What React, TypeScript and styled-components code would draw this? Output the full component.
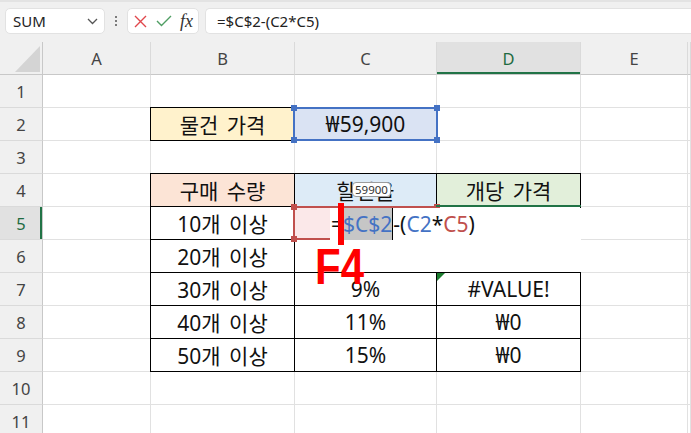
import styled, { createGlobalStyle } from "styled-components";

const GlobalStyle = createGlobalStyle`
  html, body {
    margin: 0;
    padding: 0;
    background: #fff;
    overflow: hidden;
  }
  body {
    font-family: "Noto Sans", "Noto Sans CJK KR", sans-serif;
  }
`;

const Toolbar = styled.div`
  height: 42px;
  box-sizing: border-box;
  background: #f0f0f0;
  border-top: 2px solid #e3e3e3;
  display: flex;
  align-items: flex-start;
  padding: 6px 0 0 5px;
`;

const NameBox = styled.div`
  width: 100px;
  height: 26px;
  box-sizing: border-box;
  background: #fff;
  border: 1px solid #e2e2e2;
  border-radius: 5px;
  display: flex;
  align-items: center;
  justify-content: space-between;
  padding: 0 6px 0 7px;
  font-size: 15px;
  color: #222;
`;

const Dots = styled.div`
  width: 22px;
  height: 26px;
  display: flex;
  flex-direction: column;
  align-items: center;
  justify-content: center;
  gap: 2px;

  span {
    width: 2px;
    height: 2px;
    border-radius: 1px;
    background: #555;
  }
`;

const IconBox = styled.div`
  width: 72px;
  height: 26px;
  box-sizing: border-box;
  background: #fff;
  border: 1px solid #e2e2e2;
  border-radius: 5px;
  display: flex;
  align-items: center;
  padding-left: 6px;
  gap: 9px;
`;

const Fx = styled.span`
  font-family: "Liberation Serif", serif;
  font-style: italic;
  font-size: 18px;
  color: #333;
  line-height: 1;
  margin-left: -1px;
`;

const FormulaInput = styled.div`
  flex: 1;
  height: 26px;
  margin-left: 6px;
  box-sizing: border-box;
  background: #fff;
  border: 1px solid #e2e2e2;
  border-right: none;
  border-radius: 5px 0 0 5px;
  padding-left: 11px;
  font-size: 15px;
  line-height: 24px;
  color: #222;
`;

const Sheet = styled.div`
  display: grid;
  grid-template-columns: 43px 108px 144px 142px 144px 107px 1fr;
  grid-auto-rows: 33px;
`;

const Corner = styled.div`
  background: #f0f0f0;
  border-right: 1px solid #c8c8c8;
  border-bottom: 1px solid #c8c8c8;
  box-sizing: border-box;
`;

const ColHeader = styled.div<{ $active?: boolean }>`
  box-sizing: border-box;
  background: ${(p) => (p.$active ? "#e1e1e1" : "#f0f0f0")};
  border-right: 1px solid #dadada;
  border-bottom: 1px solid #c8c8c8;
  box-shadow: ${(p) => (p.$active ? "inset 0 -2px 0 #217346" : "none")};
  display: flex;
  align-items: center;
  justify-content: center;
  font-size: 16.5px;
  color: ${(p) => (p.$active ? "#1e6b41" : "#444")};
`;

const RowHeader = styled.div<{ $active?: boolean }>`
  box-sizing: border-box;
  background: ${(p) => (p.$active ? "#e1e1e1" : "#f0f0f0")};
  border-right: 1px solid #c8c8c8;
  border-bottom: 1px solid #dadada;
  box-shadow: ${(p) => (p.$active ? "inset -2px 0 0 #217346" : "none")};
  display: flex;
  align-items: center;
  justify-content: center;
  font-size: 16.5px;
  color: ${(p) => (p.$active ? "#1e6b41" : "#444")};
`;

const Cell = styled.div<{ $fill?: string; $boxed?: boolean }>`
  position: relative;
  box-sizing: border-box;
  background: ${(p) => p.$fill ?? "#fff"};
  border-right: 1px solid #e1e1e1;
  border-bottom: 1px solid #e1e1e1;
  display: flex;
  align-items: center;
  justify-content: center;
  font-size: 21px;
  color: #111;
  white-space: nowrap;
  word-spacing: 3px;

  &::after {
    content: "";
    display: ${(p) => (p.$boxed ? "block" : "none")};
    position: absolute;
    top: -1px;
    left: -1px;
    right: -1px;
    bottom: -1px;
    border: 1px solid #000;
    pointer-events: none;
  }
`;

const RefFrame = styled.div<{ $color: string }>`
  position: absolute;
  top: -1px;
  left: -2px;
  right: -2px;
  bottom: -1px;
  border: 2px solid ${(p) => p.$color};
  z-index: 3;
  pointer-events: none;

  span {
    position: absolute;
    width: 6px;
    height: 6px;
    background: ${(p) => p.$color};
  }
  span:nth-child(1) { top: -4px; left: -4px; }
  span:nth-child(2) { top: -4px; right: -4px; }
  span:nth-child(3) { bottom: -4px; left: -4px; }
  span:nth-child(4) { bottom: -4px; right: -4px; }
`;

const Tooltip = styled.div`
  position: absolute;
  left: 57px;
  top: 8px;
  height: 15px;
  box-sizing: border-box;
  padding: 0 2px;
  background: #fff;
  border: 1px solid #9c9c9c;
  border-radius: 4px;
  font-size: 11.5px;
  line-height: 13px;
  color: #333;
  word-spacing: 0;
  z-index: 6;
`;

const ActiveBar = styled.div`
  position: absolute;
  top: -2px;
  left: -1px;
  right: -1px;
  height: 2px;
  background: #217346;
  z-index: 4;
`;

const ErrorMark = styled.div`
  position: absolute;
  top: 0;
  left: 0;
  width: 0;
  height: 0;
  border-top: 8px solid #1b7c2e;
  border-right: 8px solid transparent;
  z-index: 2;
`;

const Editor = styled.div`
  position: absolute;
  top: 1px;
  left: -107px;
  width: 251px;
  height: 64px;
  background: #fff;
  z-index: 5;
  padding-left: 1px;
  box-sizing: border-box;
  font-size: 21px;
  line-height: 32px;
  color: #111;
  word-spacing: 0;
  display: flex;
  align-items: flex-start;
`;

const Token = styled.span<{ $color: string }>`
  color: ${(p) => p.$color};
`;

const Selection = styled.span`
  display: inline-block;
  height: 32px;
  background: #c6c6c6;
  color: #4472c4;
  border-right: 1px solid #000;
`;

const RedBar = styled.div`
  position: absolute;
  left: 8px;
  top: -5px;
  width: 6px;
  height: 42px;
  background: #ff0000;
`;

const KeyHint = styled.div`
  position: absolute;
  left: -15px;
  top: 34px;
  font-family: "Liberation Sans", Arial, sans-serif;
  font-weight: 700;
  font-size: 50px;
  line-height: 50px;
  color: #ff0000;
  transform: scaleX(0.84);
  transform-origin: left top;
`;

type Spec = { text?: string; fill?: string; boxed?: boolean };

const cells: Record<string, Spec> = {
  B2: { text: "물건 가격", fill: "#fff2cc", boxed: true },
  C2: { text: "₩59,900", fill: "#dae3f3", boxed: true },
  B4: { text: "구매 수량", fill: "#fce4d6", boxed: true },
  C4: { text: "할인율", fill: "#ddebf7", boxed: true },
  D4: { text: "개당 가격", fill: "#e2efda", boxed: true },
  B5: { text: "10개 이상", boxed: true },
  B6: { text: "20개 이상", boxed: true },
  B7: { text: "30개 이상", boxed: true },
  B8: { text: "40개 이상", boxed: true },
  B9: { text: "50개 이상", boxed: true },
  C5: { fill: "#fbe8e9", boxed: true },
  C6: { boxed: true },
  C7: { text: "9%", boxed: true },
  C8: { text: "11%", boxed: true },
  C9: { text: "15%", boxed: true },
  D5: { boxed: true },
  D6: { boxed: true },
  D7: { text: "#VALUE!", boxed: true },
  D8: { text: "₩0", boxed: true },
  D9: { text: "₩0", boxed: true },
};

const columns = ["A", "B", "C", "D", "E", "F"];
const rows = [1, 2, 3, 4, 5, 6, 7, 8, 9, 10, 11];

const Corners = () => (
  <>
    <span />
    <span />
    <span />
    <span />
  </>
);

const Extras = ({ address }: { address: string }) => {
  switch (address) {
    case "C2":
      return (
        <RefFrame $color="#4472c4">
          <Corners />
        </RefFrame>
      );
    case "C4":
      return <Tooltip>59900</Tooltip>;
    case "C5":
      return (
        <RefFrame $color="#c0504d">
          <Corners />
        </RefFrame>
      );
    case "D5":
      return (
        <>
          <ActiveBar />
          <Editor>
            <span>=</span>
            <Selection>$C$2</Selection>
            <span>-(</span>
            <Token $color="#4472c4">C2</Token>
            <span>*</span>
            <Token $color="#c0504d">C5</Token>
            <span>)</span>
            <RedBar />
            <KeyHint>F4</KeyHint>
          </Editor>
        </>
      );
    case "D7":
      return <ErrorMark />;
    default:
      return null;
  }
};

const App = () => {
  return (
    <>
      <GlobalStyle />
      <Toolbar>
        <NameBox>
          <span>SUM</span>
          <svg width="11" height="7" viewBox="0 0 11 7">
            <path d="M1 1 L5.5 5.5 L10 1" fill="none" stroke="#555" strokeWidth="1.3" />
          </svg>
        </NameBox>
        <Dots>
          <span />
          <span />
          <span />
        </Dots>
        <IconBox>
          <svg width="13" height="13" viewBox="0 0 13 13">
            <path d="M1 1 L12 12 M12 1 L1 12" stroke="#e0474c" strokeWidth="1.4" />
          </svg>
          <svg width="16" height="12" viewBox="0 0 16 12">
            <path d="M1 6 L5.5 10.5 L15 1" fill="none" stroke="#4f9e63" strokeWidth="1.4" />
          </svg>
          <Fx>fx</Fx>
        </IconBox>
        <FormulaInput>=$C$2-(C2*C5)</FormulaInput>
      </Toolbar>
      <Sheet>
        <Corner>
          <svg width="42" height="32" viewBox="0 0 42 32">
            <polygon points="15,30 40,30 40,4" fill="#d4d4d4" />
          </svg>
        </Corner>
        {columns.map((c) => (
          <ColHeader key={c} $active={c === "D"}>
            {c === "F" ? "" : c}
          </ColHeader>
        ))}
        {rows.map((r) => (
          <>
            <RowHeader key={`h${r}`} $active={r === 5}>
              {r}
            </RowHeader>
            {columns.map((c) => {
              const address = `${c}${r}`;
              const spec = cells[address] ?? {};
              return (
                <Cell key={address} $fill={spec.fill} $boxed={spec.boxed}>
                  {spec.text}
                  <Extras address={address} />
                </Cell>
              );
            })}
          </>
        ))}
      </Sheet>
    </>
  );
};

export default App;
